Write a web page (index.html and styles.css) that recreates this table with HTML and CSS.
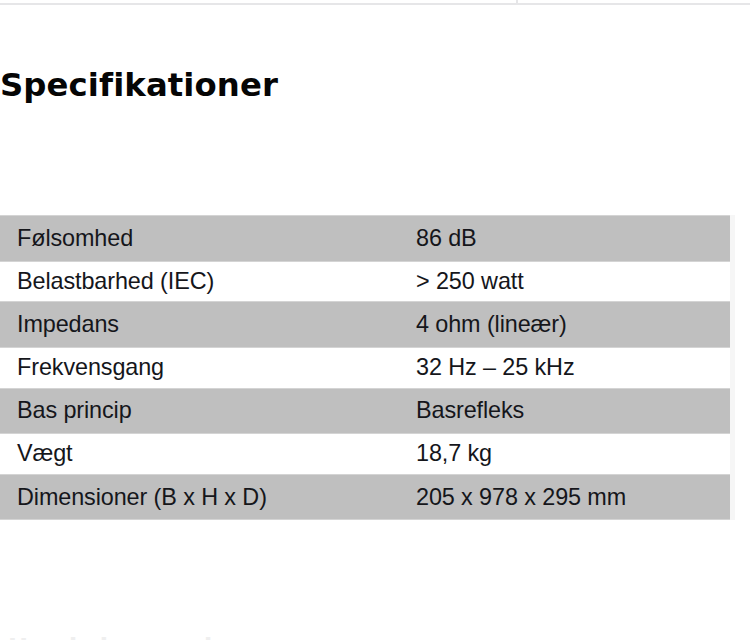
FILE: index.html
```html
<!DOCTYPE html>
<html lang="da">
<head>
<meta charset="utf-8">
<title>Specifikationer</title>
<link rel="stylesheet" href="styles.css">
</head>
<body>
<div class="topbar">
  <div class="topcell topcell-left"></div>
  <div class="topcell topcell-right"></div>
</div>
<h2 class="heading">Specifikationer</h2>
<div class="spec">
  <div class="row grey"><span class="k">Følsomhed</span><span class="v">86 dB</span></div>
  <div class="row white"><span class="k">Belastbarhed (IEC)</span><span class="v">&gt; 250 watt</span></div>
  <div class="row grey"><span class="k">Impedans</span><span class="v">4 ohm (lineær)</span></div>
  <div class="row white"><span class="k">Frekvensgang</span><span class="v">32 Hz – 25 kHz</span></div>
  <div class="row grey"><span class="k">Bas princip</span><span class="v">Basrefleks</span></div>
  <div class="row white"><span class="k">Vægt</span><span class="v">18,7 kg</span></div>
  <div class="row grey"><span class="k">Dimensioner (B x H x D)</span><span class="v">205 x 978 x 295 mm</span></div>
</div>
<h3 class="next">Hvad siger andre</h3>
</body>
</html>
```
FILE: styles.css
```css
html, body {
  margin: 0;
  padding: 0;
  background: #ffffff;
  overflow: hidden;
}
body {
  width: 750px;
  height: 640px;
  font-family: "Liberation Sans", Arial, sans-serif;
}
.topbar {
  display: flex;
  height: 3px;
  border-bottom: 2px solid #e6e6e8;
}
.topcell-left {
  width: 516px;
  border-right: 2px solid #e6e6e8;
}
.topcell-right {
  flex: 1;
}
.heading {
  margin: 0;
  padding-top: 60px;
  padding-left: 0;
  font-family: "DejaVu Sans", Verdana, sans-serif;
  font-weight: bold;
  font-size: 32.3px;
  line-height: 40px;
  color: #050505;
  letter-spacing: 0.1px;
}
.spec {
  margin-top: 110px;
  width: 730px;
  border-right: 5px solid #f6f6f6;
}
.row {
  display: flex;
  align-items: center;
  box-sizing: border-box;
  font-size: 23.4px;
  color: #15161b;
  letter-spacing: -0.1px;
}
.row.grey {
  background: #bfbfbf;
  height: 46.5px;
  border-top: 1px solid #d4d4d4;
  border-bottom: 1px solid #d4d4d4;
}
.row.white {
  background: #ffffff;
  height: 39.8px;
}
.k {
  width: 416px;
  padding-left: 17px;
  box-sizing: border-box;
}
.v {
  flex: 1;
}
.next {
  margin: 0;
  margin-top: 113px;
  padding-left: 8px;
  font-family: "DejaVu Sans", Verdana, sans-serif;
  font-weight: bold;
  font-size: 24px;
  line-height: 30px;
  color: #efefef;
}
```
